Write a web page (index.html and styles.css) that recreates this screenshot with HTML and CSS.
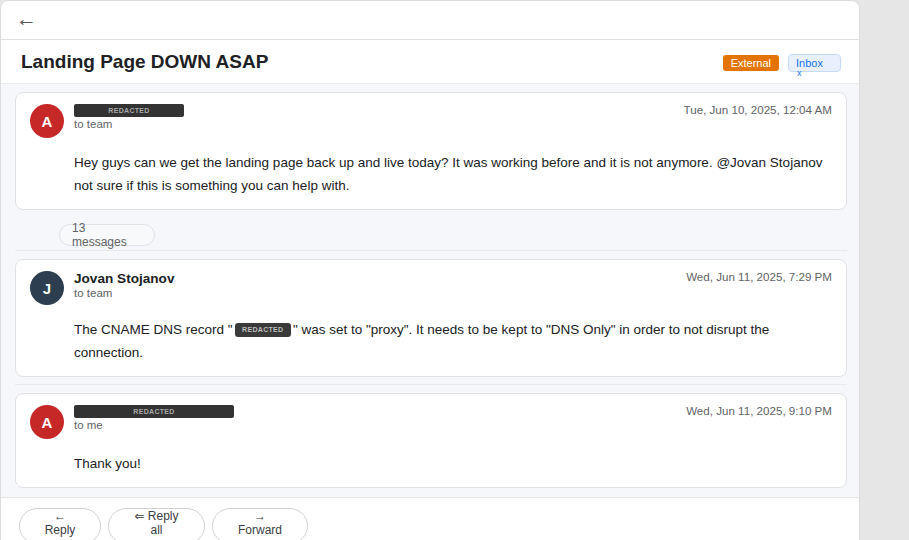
FILE: index.html
```html
<!DOCTYPE html>
<html lang="en">
<head>
<meta charset="utf-8">
<title>Landing Page DOWN ASAP</title>
<link rel="stylesheet" href="styles.css">
</head>
<body>
<div class="app">
  <main class="panel">
    <header class="topbar">
      <button class="back" aria-label="Back">←</button>
    </header>
    <div class="subject-row">
      <h1 class="subject">Landing Page DOWN ASAP</h1>
      <div class="labels">
        <span class="label label-external">External</span>
        <span class="label label-inbox">Inbox<span class="label-x">x</span></span>
      </div>
    </div>
    <section class="thread">
      <article class="item item-first">
        <div class="card">
          <div class="msg-head">
            <div class="avatar avatar-red">A</div>
            <div class="who">
              <span class="redacted redacted-sm">REDACTED</span>
              <div class="to">to team</div>
            </div>
            <time class="date">Tue, Jun 10, 2025, 12:04 AM</time>
          </div>
          <div class="msg-body">Hey guys can we get the landing page back up and live today? It was working before and it is not anymore. @Jovan Stojanov not sure if this is something you can help with.</div>
        </div>
        <div class="collapsed"><span class="collapsed-text">13 messages</span></div>
      </article>
      <article class="item">
        <div class="card">
          <div class="msg-head">
            <div class="avatar avatar-dark">J</div>
            <div class="who">
              <div class="name">Jovan Stojanov</div>
              <div class="to">to team</div>
            </div>
            <time class="date">Wed, Jun 11, 2025, 7:29 PM</time>
          </div>
          <div class="msg-body">The CNAME DNS record "<span class="redacted-inline">REDACTED</span>" was set to "proxy". It needs to be kept to "DNS Only" in order to not disrupt the connection.</div>
        </div>
      </article>
      <article class="item">
        <div class="card">
          <div class="msg-head">
            <div class="avatar avatar-red">A</div>
            <div class="who">
              <span class="redacted redacted-lg">REDACTED</span>
              <div class="to">to me</div>
            </div>
            <time class="date">Wed, Jun 11, 2025, 9:10 PM</time>
          </div>
          <div class="msg-body">Thank you!</div>
        </div>
      </article>
    </section>
    <footer class="actions">
      <button class="action action-reply"><span class="action-text">← Reply</span></button>
      <button class="action action-replyall"><span class="action-text">⇐ Reply all</span></button>
      <button class="action action-forward"><span class="action-text">→ Forward</span></button>
    </footer>
  </main>
</div>
</body>
</html>
```

FILE: styles.css
```css
html, body {
  margin: 0;
  padding: 0;
}

body {
  background: #e6e6e6;
  font-family: "Liberation Sans", Arial, "DejaVu Sans", sans-serif;
  color: #202124;
}

.app {
  display: flex;
  min-height: 100vh;
}

.panel {
  width: 860px;
  box-sizing: border-box;
  background: #fff;
  border: 1px solid #dcdcdc;
  border-radius: 8px 8px 0 0;
  min-height: 100vh;
}

.topbar {
  height: 38px;
  border-bottom: 1px solid #e0e0e0;
  display: flex;
  align-items: center;
  padding-left: 15px;
}

.back {
  background: none;
  border: 0;
  padding: 0;
  margin: -3px 0 0;
  font-family: "Liberation Sans", Arial, sans-serif;
  font-size: 21px;
  line-height: 1;
  color: #555;
  cursor: pointer;
}

.subject-row {
  height: 43px;
  border-bottom: 1px solid #ececec;
  display: flex;
  align-items: center;
  justify-content: space-between;
  padding: 0 18px 0 20px;
}

.subject {
  margin: 0;
  font-size: 19px;
  font-weight: 700;
  color: #202124;
}

.labels {
  display: flex;
  align-items: center;
  gap: 9px;
  padding-top: 2px;
}

.label {
  display: inline-block;
  box-sizing: border-box;
  font-size: 11px;
  border-radius: 3px;
}

.label-external {
  height: 16px;
  line-height: 16px;
  padding: 0 8px;
  background: #e37400;
  color: #fff;
}

.label-inbox {
  width: 53px;
  height: 18px;
  padding: 3px 7px 0;
  line-height: 10px;
  background: #e8f0fe;
  border: 1px solid #c6dafc;
  color: #1a73e8;
  border-radius: 4px;
}

.label-x {
  display: block;
  font-size: 9px;
  line-height: 10px;
  padding-left: 1px;
}

.thread {
  background: #f6f7fb;
  padding: 0 12px 0 14px;
}

.item {
  padding: 8px 0 7px;
  border-bottom: 1px solid #e8eaef;
}

.item-first {
  padding-bottom: 4px;
}

.item:last-child {
  border-bottom: 0;
  padding-bottom: 9px;
}

.card {
  background: #fff;
  border: 1px solid #dfe1e5;
  border-radius: 8px;
  padding: 11px 14px 12px;
}

.msg-head {
  display: flex;
  align-items: flex-start;
  gap: 10px;
}

.avatar {
  flex: none;
  width: 34px;
  height: 34px;
  border-radius: 50%;
  display: flex;
  align-items: center;
  justify-content: center;
  color: #fff;
  font-weight: 700;
  font-size: 15px;
}

.avatar-red {
  background: #c62828;
}

.avatar-dark {
  background: #2c3e50;
}

.who {
  flex: 1;
  min-width: 0;
}

.redacted {
  display: block;
  height: 13px;
  line-height: 13px;
  background: #333;
  border-radius: 2px;
  color: #a8a8a8;
  font-size: 7px;
  font-weight: 700;
  letter-spacing: 0.3px;
  text-align: center;
}

.redacted-sm {
  width: 110px;
}

.redacted-lg {
  width: 160px;
}

.name {
  font-size: 13.6px;
  font-weight: 700;
  line-height: 15px;
  color: #202124;
}

.to {
  font-size: 11.5px;
  line-height: 14px;
  color: #5f6368;
}

.date {
  flex: none;
  font-size: 11.6px;
  line-height: 13px;
  margin-top: -1px;
  color: #5f6368;
}

.msg-body {
  margin: 13px 0 0 44px;
  font-size: 13.5px;
  line-height: 23px;
  color: #202124;
}

.redacted-inline {
  display: inline-block;
  height: 14px;
  line-height: 14px;
  margin: 0 2px;
  padding: 0 7.5px;
  background: #3a3a3a;
  border-radius: 3px;
  color: #bdbdbd;
  font-size: 7px;
  font-weight: 700;
  letter-spacing: 0.3px;
  vertical-align: 2px;
}

.collapsed {
  margin: 14px 0 0 44px;
  width: 96px;
  height: 22px;
  box-sizing: border-box;
  border: 1px solid #e1e3e8;
  border-radius: 11px;
  background: #f8f9fb;
  display: flex;
  align-items: center;
  padding-left: 12px;
  font-size: 12px;
  line-height: 14px;
  color: #5f6368;
}

.collapsed-text {
  width: min-content;
}

.actions {
  border-top: 1px solid #e6e6e6;
  padding: 10px 18px;
  display: flex;
  gap: 7px;
}

.action {
  box-sizing: border-box;
  height: 36px;
  padding: 0 20px;
  border: 1px solid #d0d0d0;
  border-radius: 18px;
  background: #fff;
  font-family: "Liberation Sans", Arial, "DejaVu Sans", sans-serif;
  font-size: 12px;
  line-height: 14px;
  color: #3c4043;
  display: flex;
  align-items: flex-start;
  justify-content: center;
  cursor: pointer;
}

.action-text {
  text-align: center;
}

.action-reply {
  width: 82px;
}

.action-replyall {
  width: 97px;
}

.action-forward {
  width: 96px;
}
```
